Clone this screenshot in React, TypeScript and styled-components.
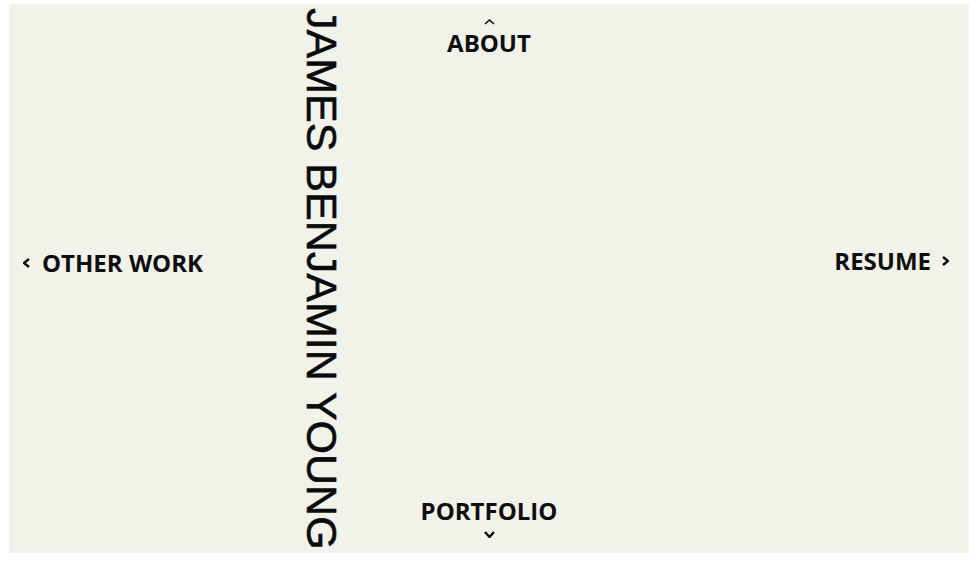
import React from "react";
import styled, { createGlobalStyle } from "styled-components";

const Global = createGlobalStyle`
  html, body { margin: 0; padding: 0; background: #ffffff; }
  #root { width: 979px; height: 564px; }
`;

const Panel = styled.main`
  margin: 4px 0 0 9px;
  width: 960px;
  height: 549px;
  background: #f1f3eb;
  display: grid;
  grid-template-columns: 1fr 200px 1fr;
  grid-template-rows: auto 1fr auto;
  color: #0e0e0e;
  font-family: "Open Sans", "Noto Sans", sans-serif;
  font-weight: 700;
  font-size: 24px;
  line-height: 24px;
`;

const LeftZone = styled.div`
  grid-column: 1;
  grid-row: 1 / 4;
  display: flex;
  align-items: center;
  padding: 0 43px 0 14px;
`;

const RightZone = styled.div`
  grid-column: 3;
  grid-row: 1 / 4;
  display: flex;
  align-items: center;
  justify-content: flex-end;
  padding: 0 20px 0 0;
`;

const SideLink = styled.a<{ $gap: number; $lift: number }>`
  display: flex;
  align-items: center;
  gap: ${(p) => p.$gap}px;
  margin-bottom: ${(p) => p.$lift}px;
  color: inherit;
  text-decoration: none;
  white-space: nowrap;
`;

const Name = styled.h1`
  margin: 0 0 0 auto;
  writing-mode: vertical-rl;
  font-family: "Liberation Sans", Arial, sans-serif;
  font-weight: 400;
  font-size: 43px;
  line-height: 48px;
  white-space: nowrap;
  color: #0a0a0a;
  -webkit-text-stroke: 0.6px #0a0a0a;
`;

const VLink = styled.a<{ $top: boolean }>`
  grid-column: 2;
  grid-row: ${(p) => (p.$top ? 1 : 3)};
  display: flex;
  flex-direction: ${(p) => (p.$top ? "column" : "column-reverse")};
  align-items: center;
  gap: ${(p) => (p.$top ? 6 : 8)}px;
  padding: ${(p) => (p.$top ? "15px 0 0" : "0 0 15px")};
  color: inherit;
  text-decoration: none;
  white-space: nowrap;
`;

const Chevron = ({ dir, w, h, sw }: { dir: "up" | "down" | "left" | "right"; w: number; h: number; sw: number }) => {
  const pts =
    dir === "up"
      ? `1,${h - 1} ${w / 2},1 ${w - 1},${h - 1}`
      : dir === "down"
      ? `1,1 ${w / 2},${h - 1} ${w - 1},1`
      : dir === "left"
      ? `${w - 1},1 1,${h / 2} ${w - 1},${h - 1}`
      : `1,1 ${w - 1},${h / 2} 1,${h - 1}`;
  return (
    <svg width={w} height={h} viewBox={`0 0 ${w} ${h}`} aria-hidden="true">
      <polyline points={pts} fill="none" stroke="#0e0e0e" strokeWidth={sw} strokeLinecap="butt" strokeLinejoin="miter" />
    </svg>
  );
};

export default function App() {
  return (
    <>
      <Global />
      <Panel>
        <LeftZone>
          <SideLink href="#" $gap={12} $lift={31}>
            <Chevron dir="left" w={7} h={10} sw={2.4} />
            <span>OTHER WORK</span>
          </SideLink>
          <Name>JAMES BENJAMIN YOUNG</Name>
        </LeftZone>
        <VLink href="#" $top>
          <Chevron dir="up" w={11} h={6} sw={1.6} />
          <span>ABOUT</span>
        </VLink>
        <VLink href="#" $top={false}>
          <Chevron dir="down" w={11} h={7} sw={2.4} />
          <span>PORTFOLIO</span>
        </VLink>
        <RightZone>
          <SideLink href="#" $gap={11} $lift={36}>
            <span>RESUME</span>
            <Chevron dir="right" w={7} h={10} sw={2.4} />
          </SideLink>
        </RightZone>
      </Panel>
    </>
  );
}
